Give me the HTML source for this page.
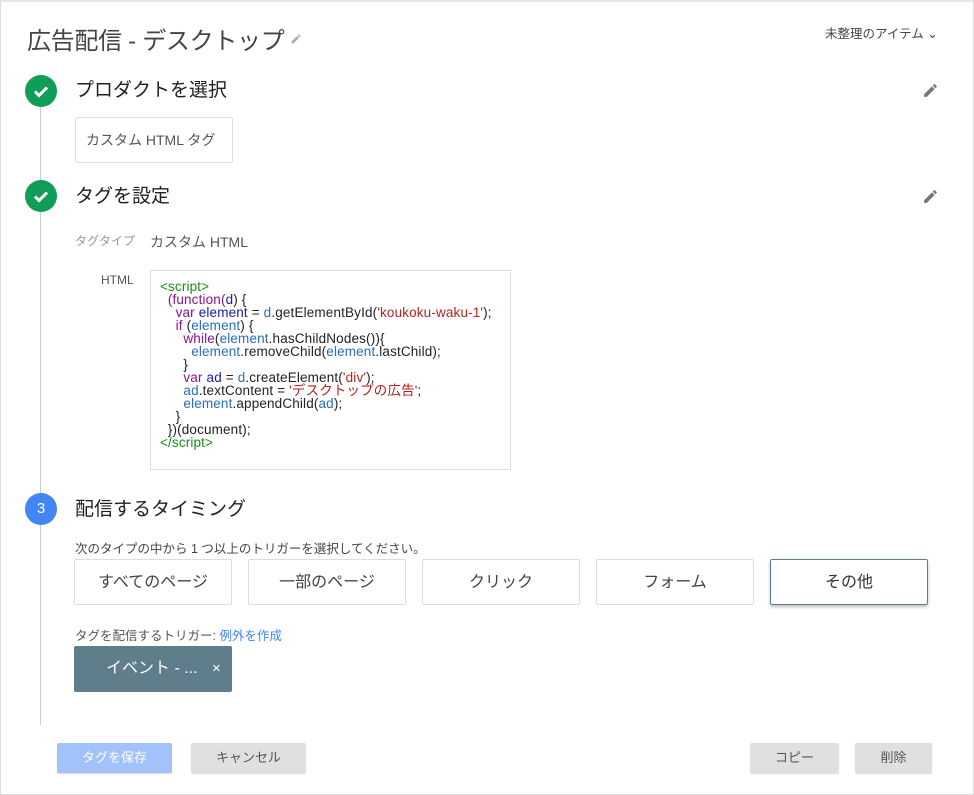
<!DOCTYPE html>
<html><head><meta charset="utf-8"><style>
*{box-sizing:border-box;margin:0;padding:0}
body{width:974px;height:795px;background:#fff;font-family:"Liberation Sans","Noto Sans CJK JP",sans-serif;color:#212121;position:relative;overflow:hidden}
.frame{position:absolute;left:0;top:0;width:974px;height:795px;border:1px solid #ddd;border-top:2px solid #e5e5e5}
.a{position:absolute;white-space:nowrap}
.circ{position:absolute;width:32px;height:32px;border-radius:50%;left:25px}
.g{background:#0f9d58}
.line{position:absolute;left:40px;top:107px;width:1px;height:618px;background:#ccc}
.h{font-size:19px;color:#212121}
.btn{position:absolute;top:559px;width:158px;height:46px;border:1px solid #ddd;border-radius:2px;font-size:16px;color:#444;text-align:center;line-height:46px;background:#fff}
.code{position:absolute;left:150px;top:270px;width:361px;height:200px;border:1px solid #ddd;padding:9px 0 0 9px;font-size:13.5px;letter-spacing:0.15px;line-height:13px;white-space:pre;font-family:"Liberation Sans","Noto Sans CJK JP",sans-serif;color:#222}
.t{color:#1a8c1a}.k{color:#881391}.v{color:#1a1aa6}.b{color:#2a6db8}.s{color:#b22222}
.fb{position:absolute;top:743px;height:30px;border-radius:2px;font-size:13px;text-align:center;line-height:30px;color:#555;background:#e0e0e0;box-shadow:0 1px 1px rgba(0,0,0,.15)}
</style></head><body>
<div class="frame"></div>
<div class="a" style="left:27px;top:21px;font-size:24px;color:#444;letter-spacing:-0.3px">広告配信 - デスクトップ</div>
<svg class="a" style="left:290px;top:33px" width="12" height="12" viewBox="0 0 24 24"><path d="M3 17.25V21h3.75L17.8 9.94l-3.75-3.75L3 17.25zM20.7 7.04a1 1 0 000-1.41l-2.34-2.34a1 1 0 00-1.41 0l-1.83 1.83 3.75 3.75 1.83-1.83z" fill="#aaa"/></svg>
<div class="a" style="left:825px;top:23px;font-size:12.5px;color:#444">未整理のアイテム ⌄</div>
<div class="line"></div>
<div class="circ g" style="top:75px"></div>
<svg class="a" style="left:31px;top:81px" width="20" height="20" viewBox="0 0 20 20"><path d="M4 10.5l4 4 8-8" stroke="#fff" stroke-width="3" fill="none"/></svg>
<div class="a h" style="left:75px;top:75px">プロダクトを選択</div>
<svg class="a" style="left:922px;top:82px" width="17" height="17" viewBox="0 0 24 24"><path d="M3 17.25V21h3.75L17.8 9.94l-3.75-3.75L3 17.25zM20.7 7.04a1 1 0 000-1.41l-2.34-2.34a1 1 0 00-1.41 0l-1.83 1.83 3.75 3.75 1.83-1.83z" fill="#777"/></svg>
<div class="a" style="left:75px;top:117px;width:158px;height:46px;border:1px solid #ddd;border-radius:2px;font-size:14px;color:#555;line-height:44px;padding-left:10px">カスタム HTML タグ</div>
<div class="circ g" style="top:180px"></div>
<svg class="a" style="left:31px;top:186px" width="20" height="20" viewBox="0 0 20 20"><path d="M4 10.5l4 4 8-8" stroke="#fff" stroke-width="3" fill="none"/></svg>
<div class="a h" style="left:75px;top:181px">タグを設定</div>
<svg class="a" style="left:922px;top:188px" width="17" height="17" viewBox="0 0 24 24"><path d="M3 17.25V21h3.75L17.8 9.94l-3.75-3.75L3 17.25zM20.7 7.04a1 1 0 000-1.41l-2.34-2.34a1 1 0 00-1.41 0l-1.83 1.83 3.75 3.75 1.83-1.83z" fill="#777"/></svg>
<div class="a" style="left:75px;top:232px;font-size:12px;color:#999">タグタイプ</div>
<div class="a" style="left:150px;top:232px;font-size:14px;color:#555">カスタム HTML</div>
<div class="a" style="left:101px;top:273px;font-size:12px;color:#555">HTML</div>
<div class="code"><span class="t">&lt;script&gt;</span>
  <span class="k">(function(</span><span class="v">d</span>) {
    <span class="k">var</span> <span class="v">element</span> = <span class="b">d</span>.getElementById(<span class="s">'koukoku-waku-1'</span>);
    <span class="k">if</span> (<span class="b">element</span>) {
      <span class="k">while</span>(<span class="b">element</span>.hasChildNodes()){
        <span class="b">element</span>.removeChild(<span class="b">element</span>.lastChild);
      }
      <span class="k">var</span> <span class="v">ad</span> = <span class="b">d</span>.createElement(<span class="s">'div'</span>);
      <span class="b">ad</span>.textContent = <span class="s">'デスクトップの広告'</span>;
      <span class="b">element</span>.appendChild(<span class="b">ad</span>);
    }
  })(document);
<span class="t">&lt;/script&gt;</span></div>
<div class="circ" style="top:493px;background:#4285f4;color:#fff;font-size:15px;text-align:center;line-height:32px">3</div>
<div class="a h" style="left:75px;top:494px">配信するタイミング</div>
<div class="a" style="left:75px;top:538px;font-size:12.5px;color:#444">次のタイプの中から 1 つ以上のトリガーを選択してください。</div>
<div class="btn" style="left:74px">すべてのページ</div>
<div class="btn" style="left:248px">一部のページ</div>
<div class="btn" style="left:422px">クリック</div>
<div class="btn" style="left:596px">フォーム</div>
<div class="btn" style="left:770px;border-color:#607d8b;box-shadow:0 2px 3px rgba(0,0,0,.25);color:#333">その他</div>
<div class="a" style="left:75px;top:625px;font-size:12.5px;color:#555">タグを配信するトリガー: <span style="color:#4285f4">例外を作成</span></div>
<div class="a" style="left:74px;top:646px;width:158px;height:46px;background:#607d8b;border-radius:2px;color:#fff;font-size:16px;line-height:46px;padding-left:32px">イベント - ...<span style="position:absolute;left:138px;font-size:15px">×</span></div>
<div class="fb" style="left:57px;width:115px;background:#a1c2fa;color:#fff">タグを保存</div>
<div class="fb" style="left:191px;width:115px">キャンセル</div>
<div class="fb" style="left:750px;width:89px">コピー</div>
<div class="fb" style="left:855px;width:77px">削除</div>
</body></html>
